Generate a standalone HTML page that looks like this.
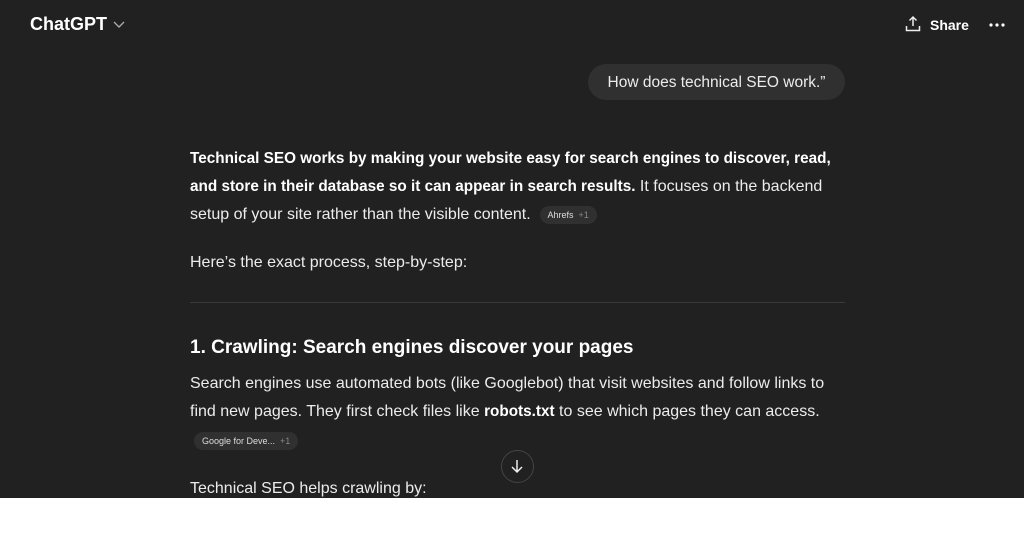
<!DOCTYPE html>
<html><head><meta charset="utf-8"><style>
html,body{margin:0;padding:0;width:1024px;height:546px;background:#fff;overflow:hidden}
body{font-family:"Liberation Sans",sans-serif;color:#ececec}
.app{position:absolute;left:0;top:0;width:1024px;height:498px;background:#212121;overflow:hidden}
.a{position:absolute;white-space:nowrap}
.p{font-size:16px;line-height:28px}
b{font-weight:bold;color:#fff;font-size:15.3px}
.chip{display:inline-block;background:#303030;border-radius:10px;font-size:9px;line-height:18px;padding:0 8px;color:#ddd;vertical-align:middle}
.chip span{color:#888;margin-left:5px}
</style></head><body><div class="app">
<div class="a" style="left:30px;top:14px;font-size:18px;font-weight:bold;color:#fff">ChatGPT</div>
<svg class="a" style="left:112px;top:19px" width="14" height="12" viewBox="0 0 14 12"><path d="M2 3l5 5 5-5" fill="none" stroke="#aaa" stroke-width="1.4"/></svg>
<svg class="a" style="left:904px;top:15px" width="18" height="18" viewBox="0 0 18 18" fill="none" stroke="#eee" stroke-width="1.5"><path d="M9 2v9M5.5 5.5L9 2l3.5 3.5M2.5 11v4.5h13V11"/></svg>
<div class="a" style="left:930px;top:17px;font-size:14px;font-weight:bold;color:#fff">Share</div>
<svg class="a" style="left:989px;top:22px" width="16" height="6" viewBox="0 0 16 6" fill="#fff"><circle cx="2" cy="3" r="1.6"/><circle cx="8" cy="3" r="1.6"/><circle cx="14" cy="3" r="1.6"/></svg>
<div class="a" style="left:588px;top:64px;width:257px;height:36px;background:#303030;border-radius:18px;font-size:15.5px;line-height:37px;text-align:center">How does technical SEO work.”</div>
<div class="a p" style="left:190px;top:145px"><b>Technical SEO works by making your website easy for search engines to discover, read,</b></div>
<div class="a p" style="left:190px;top:173px"><b>and store in their database so it can appear in search results.</b> It focuses on the backend</div>
<div class="a p" style="left:190px;top:201px">setup of your site rather than the visible content. &nbsp;<span class="chip">Ahrefs<span>+1</span></span></div>
<div class="a p" style="left:190px;top:249px">Here’s the exact process, step-by-step:</div>
<div class="a" style="left:190px;top:302px;width:655px;height:1px;background:#3a3a3a"></div>
<div class="a" style="left:190px;top:337px;font-size:19px;font-weight:bold;color:#fff">1. Crawling: Search engines discover your pages</div>
<div class="a p" style="left:190px;top:370px">Search engines use automated bots (like Googlebot) that visit websites and follow links to</div>
<div class="a p" style="left:190px;top:398px">find new pages. They first check files like <b>robots.txt</b> to see which pages they can access.</div>
<div class="a" style="left:194px;top:432px"><span class="chip">Google for Deve...<span>+1</span></span></div>
<div class="a" style="left:501px;top:450px;width:31px;height:31px;border:1px solid #444;border-radius:50%;background:#212121"></div>
<svg class="a" style="left:508px;top:457px" width="18" height="18" viewBox="0 0 18 18" fill="none" stroke="#eee" stroke-width="1.5"><path d="M9 3v12M4 10l5 5 5-5"/></svg>
<div class="a p" style="left:190px;top:475px">Technical SEO helps crawling by:</div>
</div></body></html>
